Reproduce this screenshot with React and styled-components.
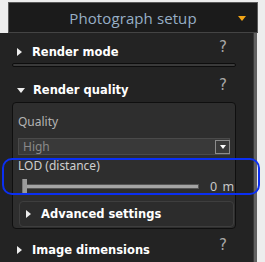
import React from 'react';
import styled, { createGlobalStyle } from 'styled-components';

const GlobalStyle = createGlobalStyle`
  html, body {
    margin: 0;
    padding: 0;
    background: #ededed;
  }
  body {
    font-family: "Open Sans", "DejaVu Sans", sans-serif;
  }
`;

const Frame = styled.div`
  position: relative;
  width: 265px;
  height: 262px;
  overflow: hidden;
`;

const Panel = styled.div`
  width: 258px;
  height: 262px;
  display: flex;
  flex-direction: column;
`;

const Header = styled.div`
  margin: 2px 0 0 8px;
  height: 29px;
  flex: none;
  border: 1px solid #5a5a5a;
  border-bottom-color: #444;
  background: #1b1b1b;
  display: flex;
  align-items: center;
  justify-content: center;
  position: relative;
  color: #97afc6;
  font-size: 15px;
  letter-spacing: 0.1px;
`;

const HeaderArrow = styled.span`
  position: absolute;
  right: 11px;
  top: 13px;
  width: 0;
  height: 0;
  border-left: 4px solid transparent;
  border-right: 4px solid transparent;
  border-top: 5px solid #f2a516;
`;

const Body = styled.div`
  flex: 1;
  display: flex;
`;

const Content = styled.div`
  width: 254px;
  background: #232323;
  padding-top: 7px;
  box-sizing: border-box;
  border-right: 1px solid #383838;
`;

const Scrollbar = styled.div`
  width: 3px;
  background: #616161;
`;

const SectionHead = styled.div`
  height: 24px;
  display: flex;
  align-items: center;
  padding-left: 17px;
  padding-right: 26px;
  margin-top: ${(p) => p.$top || 0}px;
  color: #fff;
  font-family: "DejaVu Sans", sans-serif;
  font-weight: bold;
  font-size: 11.5px;
  position: relative;
`;

const Arrow = styled.span`
  width: 0;
  height: 0;
  margin-right: ${(p) => (p.$open ? 8 : 10)}px;
  ${(p) =>
    p.$open
      ? `border-left: 4px solid transparent;
         border-right: 4px solid transparent;
         border-top: 5px solid #eee;
         margin-top: 1px;`
      : `border-top: 4px solid transparent;
         border-bottom: 4px solid transparent;
         border-left: 5px solid #eee;`}
`;

const Title = styled.span`
  flex: 1;
`;

const Help = styled.span`
  align-self: flex-start;
  margin-top: -2px;
  color: #a8a8a8;
  font-family: "DejaVu Sans", sans-serif;
  font-weight: normal;
  font-size: 15px;
`;

const Separator = styled.div`
  margin: -1px 17px 11px 12px;
  height: 2px;
  border: 1px solid #0d0d0d;
  border-radius: 3px;
  background: #3a3a3a;
`;

const Group = styled.div`
  margin: 0 17px 0 12px;
  background: #2e2e2e;
  border: 1px solid #0f0f0f;
  border-radius: 4px;
  padding: 11px 0 1px 5px;
`;

const Label = styled.div`
  font-family: "Noto Sans", sans-serif;
  font-size: 12px;
  line-height: 16px;
  color: ${(p) => p.$color || '#b4b4b4'};
  margin-bottom: ${(p) => p.$gap || 0}px;
`;

const Select = styled.div`
  margin-right: 5px;
  height: 15px;
  border: 1px solid #4a4a4a;
  background: #393939;
  display: flex;
  align-items: center;
  font-family: "Noto Sans", sans-serif;
  font-size: 12px;
  color: #8a8a8a;
  padding-left: 4px;
  margin-bottom: 3px;
`;

const SelectText = styled.span`
  flex: 1;
`;

const SelectButton = styled.span`
  width: 15px;
  height: 14px;
  margin-right: -1px;
  border: 1px solid #8c8c8c;
  background: #3a3a3a;
  display: flex;
  align-items: center;
  justify-content: center;
  box-sizing: border-box;
  &::after {
    content: '';
    border-left: 3.5px solid transparent;
    border-right: 3.5px solid transparent;
    border-top: 4px solid #fff;
  }
`;

const SliderRow = styled.div`
  height: 16px;
  display: flex;
  align-items: center;
  padding-left: 4px;
  margin-top: 4px;
`;

const Track = styled.div`
  position: relative;
  width: 176px;
  height: 3px;
  background: #a4a4a4;
  border: 1px solid #555;
  border-left: none;
`;

const Thumb = styled.span`
  position: absolute;
  left: 0;
  top: -6px;
  width: 4px;
  height: 14px;
  background: #9a9a9a;
  border-left: 1px solid #777;
`;

const Value = styled.span`
  margin-left: 11px;
  font-family: "Noto Sans", sans-serif;
  font-size: 12.5px;
  color: #c8c8c8;
  word-spacing: 2px;
`;

const SubGroup = styled.div`
  margin: 7px 1px 0 1px;
  height: 24px;
  border: 1px solid #3e3e3e;
  border-radius: 4px;
  background: #2c2c2c;
  display: flex;
  align-items: center;
  padding-left: 6px;
  color: #fff;
  font-family: "DejaVu Sans", sans-serif;
  font-weight: bold;
  font-size: 11.5px;
`;

const Highlight = styled.div`
  position: absolute;
  left: 2px;
  top: 158px;
  width: 254px;
  height: 33px;
  border: 2.5px solid #0b2ff2;
  border-radius: 10px;
  pointer-events: none;
`;

function App() {
  return (
    <>
      <GlobalStyle />
      <Frame>
        <Panel>
          <Header>
            Photograph setup
            <HeaderArrow />
          </Header>
          <Body>
            <Content>
              <SectionHead>
                <Arrow />
                <Title>Render mode</Title>
                <Help>?</Help>
              </SectionHead>
              <Separator />
              <SectionHead>
                <Arrow $open />
                <Title>Render quality</Title>
                <Help>?</Help>
              </SectionHead>
              <Group>
                <Label $gap={8}>Quality</Label>
                <Select>
                  <SelectText>High</SelectText>
                  <SelectButton />
                </Select>
                <Label $color="#cfcfcf">LOD (distance)</Label>
                <SliderRow>
                  <Track>
                    <Thumb />
                  </Track>
                  <Value>0 m</Value>
                </SliderRow>
                <SubGroup>
                  <Arrow />
                  Advanced settings
                </SubGroup>
              </Group>
              <SectionHead $top={9}>
                <Arrow />
                <Title>Image dimensions</Title>
                <Help>?</Help>
              </SectionHead>
            </Content>
            <Scrollbar />
          </Body>
        </Panel>
        <Highlight />
      </Frame>
    </>
  );
}

export default App;
